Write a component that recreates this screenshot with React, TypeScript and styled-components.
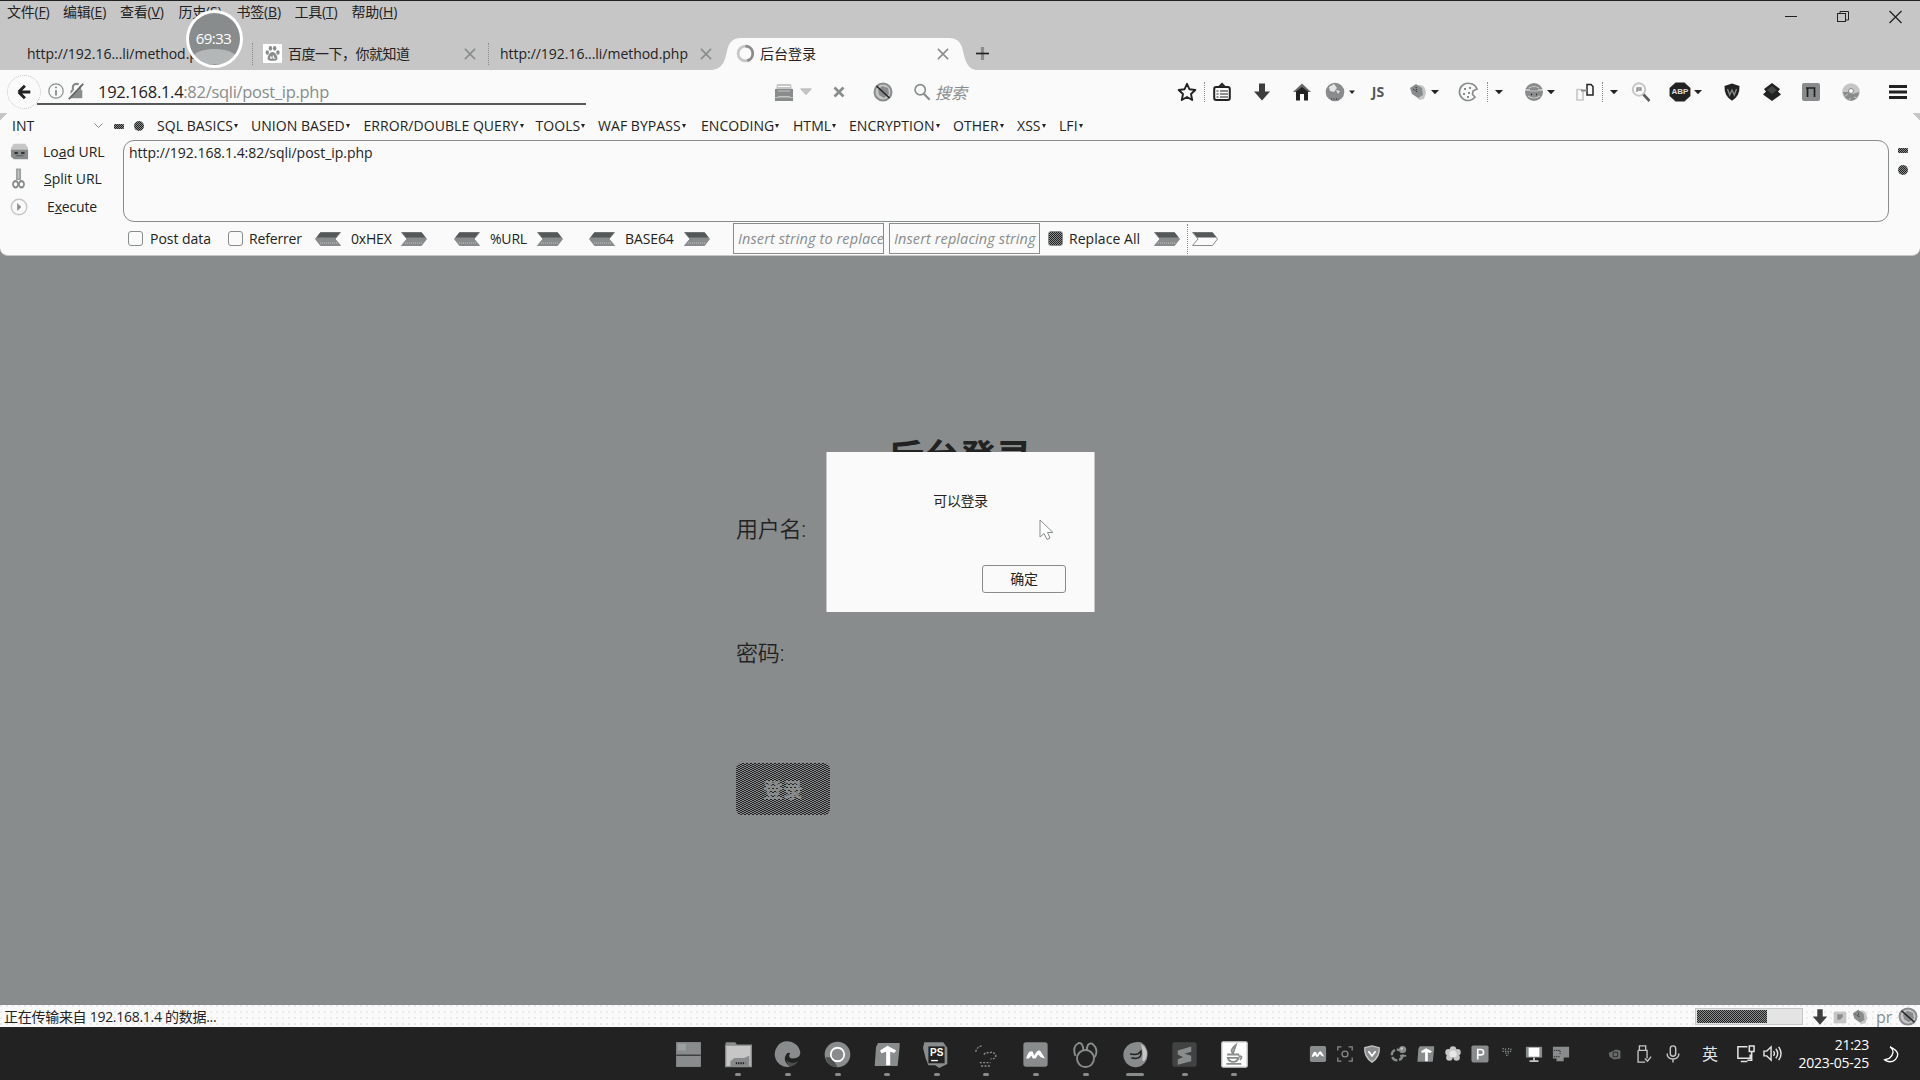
import React from "react";
import styled, { createGlobalStyle } from "styled-components";

const INK = "#222222";
const MID = "#888c8c";
const SILVER = "#c6c6c6";
const PAPER = "#fafafa";

const UI_FONT = `"Open Sans", "Noto Sans CJK SC", sans-serif`;
const CHECKER = `repeating-conic-gradient(${INK} 0 25%, ${MID} 0 50%) 0 0 / 2px 2px`;

const GlobalStyle = createGlobalStyle`
  * { box-sizing: border-box; }
  html, body { margin: 0; padding: 0; overflow: hidden; }
  body { font-family: ${UI_FONT}; font-size: 14px; color: ${INK}; background: ${MID}; }
  svg { display: block; }
`;

/* ---------- shared parts ---------- */

const Screen = styled.div`
  width: 1920px;
  height: 1080px;
  display: flex;
  flex-direction: column;
  overflow: hidden;
  background: ${MID};
  white-space: nowrap;
  cursor: default;
`;

const Cell = styled.div<{ $gap?: number; $w: number }>`
  flex: none;
  display: flex;
  align-items: center;
  width: ${(p) => p.$w}px;
  margin-left: ${(p) => p.$gap ?? 0}px;
`;

const Label = styled.span<{ $ls?: number; $size?: number }>`
  font-size: ${(p) => p.$size ?? 14}px;
  letter-spacing: ${(p) => p.$ls ?? -0.03}px;
  line-height: 20px;
`;

const Divider = styled.div<{ $gap: number; $h?: number }>`
  flex: none;
  width: 1px;
  height: ${(p) => p.$h ?? 20}px;
  margin-left: ${(p) => p.$gap}px;
  border-left: 1px dotted ${MID};
`;

const glyphs: Record<string, React.ReactNode> = {
  back: (
    <path d="M4 10 L11 3 M4 10 L11 17 M4.5 10 H17" fill="none" stroke={INK} strokeWidth="3.2" />
  ),
  info: (
    <g fill="none" stroke={MID} strokeWidth="1.3">
      <circle cx="10" cy="10" r="8" />
      <path d="M10 9v6M10 5v2" strokeWidth="2" />
    </g>
  ),
  lock: (
    <g>
      <path d="M4 9h13v9H4z" fill={MID} />
      <path d="M6.500 9V6a4 4 0 0 1 8 0v3" fill="none" stroke={MID} strokeWidth="2.400" />
      <path d="M2 17 L16 1" stroke={PAPER} strokeWidth="2" />
      <path d="M2 19 L18 2" stroke="#666969" strokeWidth="2" />
    </g>
  ),
  drive: (
    <g>
      <path d="M3 2h14l1 6H2z" fill={SILVER} />
      <path d="M1 7h18v8H1z" fill={MID} />
      <path d="M4 9h12" stroke={SILVER} strokeWidth="1" />
      <path d="M4 14h12v2H4z" fill={SILVER} />
      <path d="M1 15.500h18V19H1z" fill={MID} />
      <path d="M4 4.500h12" stroke={PAPER} strokeWidth="1" />
    </g>
  ),
  loadUrl: (
    <g>
      <path d="M4 1h12l3 5v4H1V6z" fill={SILVER} />
      <path d="M1 8h18v11H4l-3-3z" fill={MID} />
      <path d="M5 11h3v1.500H5zM12 11h3v1.500h-3zM6 15h8" fill={INK} stroke={INK} strokeWidth=".500" />
    </g>
  ),
  scissors: (
    <g fill="none" stroke={MID} strokeWidth="2">
      <path d="M10 .500v11" strokeWidth="6" strokeOpacity=".8" />
      <path d="M10 2v8" stroke={SILVER} strokeWidth="1.500" />
      <circle cx="6.500" cy="15.500" r="3" />
      <circle cx="13.500" cy="15.500" r="3" />
    </g>
  ),
  play: (
    <g>
      <circle cx="10" cy="10" r="8.600" fill="none" stroke={SILVER} strokeWidth="1.600" />
      <path d="M8 5.500 L12.500 10 L8 14.500z" fill={MID} />
    </g>
  ),
  stop: <path d="M2.500 2.500 L17.500 17.500 M17.500 2.500 L2.500 17.500" stroke={MID} strokeWidth="4.500" />,
  blocked: (
    <g>
      <circle cx="10" cy="10" r="8.500" fill={SILVER} stroke={MID} strokeWidth="2" />
      <path d="M5 8l4-4 6 2 1 6-5 4-5-3z" fill={MID} />
      <path d="M3.500 4 L16.500 16" stroke={INK} strokeWidth="1.600" />
    </g>
  ),
  search: (
    <g fill="none" stroke={MID}>
      <circle cx="8" cy="7.500" r="5.700" strokeWidth="1.800" />
      <path d="M12 12 L18.500 18.500" strokeWidth="2.400" />
    </g>
  ),
  star: (
    <path
      d="M10 1.800 L12.500 7.300 18.300 8 14 12 15.200 18 10 15 4.800 18 6 12 1.700 8 7.500 7.300z"
      fill="none"
      stroke={INK}
      strokeWidth="1.900"
      strokeLinejoin="round"
    />
  ),
  list: (
    <g fill="none" stroke={INK}>
      <rect x="2.200" y="5" width="15.600" height="13" rx="2" strokeWidth="2" />
      <path d="M7 5 L10 2 L13 5" strokeWidth="2" />
      <path d="M4.500 9h2M8 9h8M4.500 12h2M8 12h8M4.500 15h2M8 15h8" strokeWidth="1.200" />
    </g>
  ),
  down: (
    <path d="M7 1.500h6v8h5L10 18.500 2 9.500h5z" fill={INK} fillOpacity=".88" />
  ),
  home: (
    <g>
      <path d="M10 1.500 L19 10 H1z" fill="#666969" />
      <path d="M4 9.500 L10 5 L16 9.500 V18.500 H12 V12 H8 V18.500 H4z" fill={INK} />
    </g>
  ),
  globe: (
    <g>
      <circle cx="10" cy="10" r="9.300" fill={MID} />
      <path d="M4 5 L9 2 L12 6 L9 10 L5 9zM11 8l4 1-2 3z" fill="#e4e4e4" />
      <path d="M6 17h8" stroke={INK} strokeDasharray="1 1.500" />
    </g>
  ),
  caret: <path d="M2 6h16L10 14.500z" fill={INK} />,
  caretSmall: <path d="M4 7h12L10 14z" fill={INK} />,
  caretLight: <path d="M1 4h18L10 17z" fill={SILVER} stroke={MID} strokeWidth=".800" />,
  puzzle: (
    <g>
      <path d="M9 4q5-3 8 2l1 5-2 6-5 1-3-5z" fill={SILVER} />
      <path d="M2 6l6-4 6 4 1 7-5 3-6-4z" fill={MID} />
      <path d="M5 7l3 2M8 5l1 6" stroke={INK} strokeDasharray="1 1" />
    </g>
  ),
  cookie: (
    <g>
      <path
        d="M12 1.500 A8.600 8.600 0 1 0 17 15 L14.500 12.500 L15 9 L19 7 Q17 2 12 1.500z"
        fill="none"
        stroke={MID}
        strokeWidth="1.700"
      />
      <path d="M6 6h2v2H6zM11 5h2v2h-2zM5 11h2v2H5zM10 10h2v2h-2zM9 14h2v2H9z" fill={MID} />
    </g>
  ),
  smiley: (
    <g>
      <circle cx="10" cy="10" r="9" fill={MID} />
      <path d="M1 8h5M14 8h5" stroke={PAPER} strokeWidth="1.200" />
      <path d="M5 6q5-3 10 0M6 9h8" stroke={SILVER} fill="none" strokeWidth="1.200" />
      <path d="M4 14q6 4 12 0" stroke={SILVER} fill="none" strokeWidth="1.200" />
      <path d="M7 12.500h1M12 12.500h1" stroke={INK} strokeWidth="1.500" />
    </g>
  ),
  docs: (
    <g fill="none">
      <path d="M2 7.500h4l2 2V18H2z" stroke={SILVER} strokeWidth="1.600" />
      <path d="M12 2.500h4l2 2V13h-6z" stroke={INK} strokeWidth="1.500" />
      <path d="M6 8.500h6" stroke={MID} strokeWidth="2" />
    </g>
  ),
  lens: (
    <g fill="none">
      <circle cx="8" cy="7.500" r="6.200" stroke={SILVER} strokeWidth="2" />
      <path d="M6 10V6h4v2H6" stroke={MID} strokeWidth="1.300" />
      <path d="M12.500 12.500 L18.500 19" stroke="#5a5c5c" strokeWidth="2.600" />
    </g>
  ),
  abp: <path d="M6 0.500h8L19.500 6v8L14 19.500H6L0.500 14V6z" fill={INK} />,
  shield: (
    <g>
      <path d="M2.500 4 L10 1.500 17.500 4 Q18 14 10 18.800 Q2 14 2.500 4z" fill={INK} />
      <path d="M5.500 7l2.200 6L10 8l2.300 5 2.200-6" fill="none" stroke={MID} strokeWidth="1.300" />
    </g>
  ),
  diamond: (
    <g>
      <path d="M10 1 L18 7 L16 9.500 L19 12.500 L10 19 L1 12.500 L4 9.500 L2 7z" fill={INK} />
      <path d="M10 4l5 4-5 4-5-4z" fill="#444747" />
    </g>
  ),
  square: (
    <g>
      <rect x="1" y="1" width="18" height="18" rx="2" fill={MID} />
      <path d="M6.500 15V6h7v9M5 6h9" fill="none" stroke={INK} strokeWidth="1.700" />
    </g>
  ),
  disc: (
    <g>
      <circle cx="10" cy="10" r="8.800" fill={SILVER} />
      <path d="M2 10h6l4 2 6-2q0 7-8 9-7-2-8-9z" fill={MID} />
      <circle cx="10" cy="9" r="2.500" fill={PAPER} stroke={MID} />
      <path d="M4 14l3-2M13 15l3 1M9 16v2" stroke={SILVER} />
    </g>
  ),
  menu: (
    <g stroke={INK} strokeWidth="3">
      <path d="M1 4.500h18M1 10h18M1 15.500h18" />
    </g>
  ),
  close: <path d="M1.500 1.500 L18.500 18.500 M18.500 1.500 L1.500 18.500" stroke={MID} strokeWidth="2.600" />,
  plus: (
    <g>
      <path d="M10 0v20" stroke={MID} strokeWidth="5" />
      <path d="M0 10h20" stroke={INK} strokeWidth="2.600" />
    </g>
  ),
  spinner: (
    <g fill="none" strokeWidth="2.800">
      <circle cx="10" cy="10" r="7.800" stroke={SILVER} />
      <path d="M10 2.200 A7.800 7.800 0 0 1 12 17.500" stroke={MID} />
    </g>
  ),
  paw: (
    <g>
      <rect width="20" height="20" fill="#fff" />
      <g fill={MID}>
        <ellipse cx="4.500" cy="9" rx="1.800" ry="2.400" />
        <ellipse cx="7.800" cy="4.500" rx="1.800" ry="2.500" />
        <ellipse cx="12.300" cy="4.500" rx="1.800" ry="2.500" />
        <ellipse cx="15.700" cy="9" rx="1.800" ry="2.400" />
        <path d="M10 8.500q3 0 5 5 1 4-2.500 4h-5Q4 17.500 5 13.500q2-5 5-5z" />
      </g>
      <path d="M8 13v2h1.500v-2M11 12v3h2" stroke="#fff" fill="none" />
    </g>
  ),
  gray: (
    <g>
      <rect x="3" y="4" width="14" height="13" fill={SILVER} />
      <path d="M7 7h6v3l-3 3H7z" fill={MID} />
    </g>
  ),
  /* taskbar applications */
  windows: (
    <g>
      <rect x=".800" y=".800" width="18.400" height="18.400" fill={MID} />
      <path d="M1 10.500h18" stroke={INK} strokeWidth=".800" />
      <path d="M2 2h6v5H2z" fill={SILVER} opacity=".35" />
    </g>
  ),
  folder: (
    <g>
      <path d="M.500 1h7l1.500 2H.500z" fill={MID} />
      <path d="M.500 3h19v16H.500z" fill={SILVER} stroke={MID} />
      <path d="M4 19v-4l3-2.500h7l4-1.500v8z" fill={MID} />
      <path d="M8 16.500h7" stroke={INK} strokeWidth="1.600" strokeDasharray="1 .700" />
    </g>
  ),
  edge: (
    <g>
      <path d="M19.500 9 A9.500 9.500 0 1 0 12 19 Q6 15 9 10 Q10 8 12 9 Q10 12 13 13 Q19 13 19.500 9z" fill={MID} />
      <path d="M9 14q3 4 9 1-3 4-7 4z" fill="#4c4e4e" />
    </g>
  ),
  chrome: (
    <g>
      <circle cx="10" cy="10" r="9.500" fill={MID} />
      <path d="M1 12 L6 12 10 19.500 Q3 19 1 12z" fill="#505353" />
      <circle cx="10" cy="10" r="5" fill={MID} stroke="#fff" strokeWidth="1.300" />
    </g>
  ),
  tApp: (
    <g>
      <path d="M3 1.500h16v3l-1.500 14H.500l1-14z" fill={MID} />
      <path d="M4.500 7 L10 3.500 L16.500 7 L15 8.800 L12 8v10H9V8L5.500 9z" fill="#fff" />
    </g>
  ),
  ps: (
    <g>
      <path d="M1 1h14l3 4v12l-6 3-3-2H4L2 13 0 5z" fill={MID} />
      <rect x="4" y="4" width="12" height="12.500" fill={INK} />
      <path d="M6 14.500h5" stroke="#fff" />
    </g>
  ),
  bird: (
    <g fill="none" stroke={MID} strokeWidth="1" strokeDasharray="1.500 1">
      <path d="M2 8 Q3 4 7 3.500M8 10q2-2 4-1 3-2 5 2-1 3-4 2M5 16h8M6 18.500h7" />
    </g>
  ),
  mountain: (
    <g>
      <rect x="1" y="1" width="18" height="18" rx="2" fill={MID} />
      <path d="M3 13q2-7 5-5l1 3q3-6 5-3l3 5-3-1-2-2-2 3H8l-1-2-2 2z" fill="#fff" />
    </g>
  ),
  pawOutline: (
    <g fill="none" stroke={MID} strokeWidth="1.400">
      <circle cx="10" cy="13" r="6.300" />
      <path d="M2.500 11 Q0 4 5 1.500 Q8 1 8.500 7M11 7 Q11 1 15 2 Q20 6 17 12" />
    </g>
  ),
  firefox: (
    <g>
      <path d="M6 2 A9 9.200 0 1 0 19 10 Q19 4 14 1 Q10 0 6 2z" fill={MID} />
      <path d="M14 2q7 5 3 12-1 2-2 0 1-6-1-12z" fill={SILVER} />
      <path d="M6 9.500q3 1 6 0l2-2q1 5-4 5.500l-3-.500" fill="none" stroke={INK} strokeWidth="1.200" />
    </g>
  ),
  sublime: (
    <g>
      <rect x="1" y="1" width="18" height="18" rx="1.500" fill="#414343" />
      <path d="M15 4v4l-5 1.500 5 1.500v4l-10 2.500v-4l4-1.500-4-2V7z" fill={MID} />
    </g>
  ),
  java: (
    <g>
      <rect x=".600" y=".600" width="18.800" height="18.800" rx="1" fill="#fff" stroke={SILVER} />
      <path d="M11 3q-5 4-2 6 1-3 2-6zM4.500 10h9M5 12.500h8q-1 3-4 3t-4-3zM13 11q4 0 1 3M4 17h11" fill="none" stroke={MID} strokeWidth="1.300" />
    </g>
  ),
  /* notification area */
  scan: (
    <g fill="none" stroke={MID} strokeWidth="1.400">
      <path d="M2 6V2h4M14 2h4v4M18 14v4h-4M6 18H2v-4" />
      <circle cx="10" cy="10" r="3.300" />
    </g>
  ),
  guard: (
    <g>
      <path d="M2 3 L10 1 18 3 Q19 13 10 19 Q1 13 2 3z" fill={MID} stroke={SILVER} strokeWidth="1.500" />
      <path d="M6 7l4 5 4-5" fill="none" stroke="#fff" strokeWidth="2" />
    </g>
  ),
  wheel: (
    <g>
      <circle cx="8" cy="11" r="6" fill="none" stroke={MID} strokeWidth="2.500" strokeDasharray="7 2" />
      <circle cx="14" cy="5" r="4" fill={MID} />
      <circle cx="13" cy="4" r="1.500" fill={SILVER} />
      <path d="M11 12h7" stroke={MID} strokeWidth="2" />
    </g>
  ),
  flower: (
    <g fill={SILVER}>
      <circle cx="10" cy="5" r="3.600" />
      <circle cx="5" cy="8" r="3.600" />
      <circle cx="15" cy="8" r="3.600" />
      <circle cx="6" cy="14" r="3.600" />
      <circle cx="14" cy="14" r="3.600" />
      <circle cx="10" cy="10" r="4" fill="#e8e8e8" />
    </g>
  ),
  parking: (
    <g>
      <rect x=".500" y=".500" width="19" height="19" rx="2" fill={MID} />
      <path d="M7.500 16V5h3.500a3 3 0 0 1 0 6H8" fill="none" stroke="#fff" strokeWidth="1.800" />
    </g>
  ),
  sprout: (
    <path d="M5 4l4 1M11 4l4 1M5 7l10 0M8 9l5 0M9 11.500h3" fill="none" stroke={MID} strokeWidth="1.500" strokeDasharray="1.500 1.200" />
  ),
  monitor: (
    <g>
      <rect x="1" y="2" width="18" height="12" fill={MID} />
      <rect x="4" y="3" width="12" height="10" fill="#fff" />
      <path d="M10 14v3M5 18h10" stroke={SILVER} strokeWidth="2" />
    </g>
  ),
  display: (
    <g>
      <path d="M1 2h18v12H13v4H5v-3H1z" fill={MID} />
      <path d="M2 6h7v4M2 13h7" fill="none" stroke={INK} strokeDasharray="1.500 1" />
    </g>
  ),
  satellite: (
    <g fill={MID}>
      <path d="M3 9l8-4 5 1v9l-7 1-5-3z" opacity=".7" />
      <path d="M8 8h5v5H8z" fill="none" stroke={INK} />
    </g>
  ),
  usb: (
    <g fill="none" stroke={SILVER} strokeWidth="1.500">
      <path d="M6 6V1h7v5M4.500 6h10v9M4.500 6v13h8M12 15l3 3 4-5" />
    </g>
  ),
  mic: (
    <g fill="none" stroke={SILVER} strokeWidth="1.600">
      <rect x="7" y="1" width="6" height="11.500" rx="3" />
      <path d="M3.500 9.500q0 6 6.500 6t6.500-6M10 15.500v4" />
    </g>
  ),
  network: (
    <g fill="none" stroke="#e4e4e4" strokeWidth="1.600">
      <path d="M12 3H2v12h13v-4M5 18.500h7M14 2h5v6h-5zM16.500 8v9H12" />
    </g>
  ),
  volume: (
    <g fill="none" stroke="#e4e4e4" strokeWidth="1.500">
      <path d="M1 7.500h3L8.500 3v14L4 12.500H1zM11 7.500q2 2.500 0 5M13.500 5q4 5 0 10M16.500 3q5 7 0 14" />
    </g>
  ),
  moon: (
    <path d="M9 2 Q16 8 8 15 L3 16.500 Q9 21 15 16 Q22 8 9 2z" fill="none" stroke="#fff" strokeWidth="1.500" />
  ),
};

const Icon = ({ name, w = 20, h }: { name: string; w?: number; h?: number }) => (
  <svg width={w} height={h ?? w} viewBox="0 0 20 20" preserveAspectRatio="none">
    {glyphs[name]}
  </svg>
);

const IconSlot = ({ name, gap = 0, w = 20, h }: { name: string; gap?: number; w?: number; h?: number }) => (
  <Cell $gap={gap} $w={w}>
    <Icon name={name} w={w} h={h} />
  </Cell>
);

/* ---------- title area ---------- */

const TitleArea = styled.header`
  position: relative;
  height: 70px;
  border-top: 1px solid ${INK};
  background: ${SILVER};
  display: flex;
  flex-direction: column;
`;

const MenuBar = styled.nav`
  height: 36px;
  display: flex;
  align-items: flex-start;
  padding: 1px 0 0 7px;
`;

const WindowControls = styled.div`
  margin-left: auto;
  display: flex;
  align-items: center;
  gap: 40px;
  padding: 8px 18px 0 0;
`;

const TabStrip = styled.div`
  height: 33px;
  display: flex;
  align-items: center;
`;

const ActiveTab = styled.div`
  position: relative;
  flex: none;
  width: 264px;
  height: 33px;
  display: flex;
  align-items: center;
`;

const TabShape = styled.svg`
  position: absolute;
  inset: 0;
`;

const TabContent = styled.div`
  position: relative;
  display: flex;
  align-items: center;
`;

const TimerBubble = styled.div`
  position: absolute;
  left: 186px;
  top: 9px;
  width: 57px;
  height: 58px;
  border-radius: 50%;
  border: 3px solid #fff;
  background: radial-gradient(ellipse 22px 8px at 50% 84%, #b4b7b7 90%, transparent 100%), ${MID};
  color: #fff;
  display: flex;
  align-items: center;
  justify-content: center;
  font-size: 15px;
  font-weight: 500;
  letter-spacing: -0.5px;
  padding: 0 2px 2px 0;
`;

const menus: [string, string, number][] = [
  ["文件", "F", 56],
  ["编辑", "E", 57],
  ["查看", "V", 58.500],
  ["历史", "S", 58],
  ["书签", "B", 58],
  ["工具", "T", 57],
  ["帮助", "H", 60],
];

const TitleBar = () => (
  <TitleArea>
    <MenuBar>
      {menus.map(([name, key, w]) => (
        <Cell key={key} $w={w}>
          <Label $ls={-0.2}>
            {name}(<u>{key}</u>)
          </Label>
        </Cell>
      ))}
      <WindowControls>
        <svg width="12" height="14"><path d="M0 6.500h12" stroke={INK} /></svg>
        <svg width="12" height="14">
          <path d="M3 3V1.500h8.500V10H9" fill="none" stroke={INK} />
          <rect x=".500" y="3.500" width="8" height="8" fill="none" stroke={INK} />
        </svg>
        <svg width="13" height="14"><path d="M.500 1 L12.500 13 M12.500 1 L.500 13" stroke={INK} strokeWidth="1.300" /></svg>
      </WindowControls>
    </MenuBar>
    <TabStrip>
      <Cell $gap={27} $w={225}>
        <Label>http://192.16...li/method.php</Label>
      </Cell>
      <Divider $gap={0} $h={22} />
      <IconSlot name="paw" gap={10} w={19} />
      <Cell $gap={6} $w={176}>
        <Label $ls={-0.5}>百度一下，你就知道</Label>
      </Cell>
      <IconSlot name="close" w={12} />
      <Divider $gap={12} $h={22} />
      <Cell $gap={11} $w={200}>
        <Label>http://192.16...li/method.php</Label>
      </Cell>
      <IconSlot name="close" w={12} />
      <ActiveTab>
        <TabShape width="264" height="33" viewBox="0 0 264 33">
          <path d="M0 33 Q10 32 13 22 L16 10 Q19 1 29 1 H237 Q247 1 250 10 L253 22 Q256 32 264 33z" fill={PAPER} />
        </TabShape>
        <TabContent>
          <IconSlot name="spinner" gap={24} w={19} />
          <Cell $gap={5} $w={177}>
            <Label $ls={0}>后台登录</Label>
          </Cell>
          <IconSlot name="close" w={12} />
        </TabContent>
      </ActiveTab>
      <IconSlot name="plus" w={13} />
    </TabStrip>
    <TimerBubble>69:33</TimerBubble>
  </TitleArea>
);

/* ---------- address row ---------- */

const AddressRow = styled.div`
  height: 43px;
  background: ${PAPER};
  display: flex;
  align-items: center;
`;

const BackButton = styled.button`
  flex: none;
  width: 34px;
  height: 34px;
  margin-left: 7px;
  padding: 0;
  border: 1px dotted ${SILVER};
  border-radius: 50%;
  background: ${PAPER};
  display: flex;
  align-items: center;
  justify-content: center;
`;

const UrlField = styled.div`
  flex: none;
  width: 549px;
  height: 27px;
  margin: 0 0 0 -4px;
  border-bottom: 2px solid #555858;
  display: flex;
  align-items: center;
`;

const UrlText = styled.span`
  margin: 2px 0 0 13px;
  font-size: 16.500px;
  letter-spacing: -0.290px;
  line-height: 22px;
  color: ${MID};
  b { font-weight: 400; color: ${INK}; }
`;

const SearchHint = styled.span`
  font-size: 16px;
  font-style: italic;
  color: ${MID};
`;

const JsMark = styled.span`
  font: 700 14px/20px "Noto Sans", sans-serif;
  color: #555858;
  width: 20px;
  text-align: center;
`;

const AbpMark = styled.div`
  display: grid;
  place-items: center;
  > * { grid-area: 1 / 1; }
  span { font: 700 8px/8px "Liberation Sans", sans-serif; color: #dcdcdc; }
`;

type Tool = [string, number, number?];
const toolsBeforeJs: Tool[] = [
  ["star", 201], ["|", 7], ["list", 7], ["down", 20], ["home", 20], ["globe", 13], ["caretSmall", 2, 10],
];
const toolsAfterJs: Tool[] = [
  ["puzzle", 20], ["caret", 2, 10], ["cookie", 18], ["|", 9], ["caret", 6, 10], ["smiley", 20],
  ["caret", 2, 10], ["docs", 19], ["|", 7], ["caret", 6, 10], ["lens", 12],
];
const toolsAfterAbp: Tool[] = [
  ["caret", 2, 10], ["shield", 19], ["diamond", 20], ["square", 19], ["disc", 20], ["menu", 27],
];

const ToolGroup = ({ tools }: { tools: Tool[] }) => (
  <>
    {tools.map(([name, gap, w], i) =>
      name === "|" ? <Divider key={i} $gap={gap} /> : <IconSlot key={i} name={name} gap={gap} w={w ?? 20} />
    )}
  </>
);

const AddressBar = () => (
  <AddressRow>
    <BackButton><Icon name="back" w={18} /></BackButton>
    <UrlField>
      <IconSlot name="info" gap={10} w={18} />
      <IconSlot name="lock" gap={2} w={18} />
      <UrlText><b>192.168.1.4</b>:82/sqli/post_ip.php</UrlText>
    </UrlField>
    <IconSlot name="drive" gap={188} w={20} />
    <IconSlot name="caretLight" gap={6} w={12} h={9} />
    <IconSlot name="stop" gap={21} w={12} />
    <IconSlot name="blocked" gap={28} />
    <IconSlot name="search" gap={20} w={18} />
    <Cell $gap={4} $w={41}><SearchHint>搜索</SearchHint></Cell>
    <ToolGroup tools={toolsBeforeJs} />
    <Cell $gap={11} $w={20}><JsMark>JS</JsMark></Cell>
    <ToolGroup tools={toolsAfterJs} />
    <Cell $gap={18} $w={22}>
      <AbpMark><Icon name="abp" w={22} h={20} /><span>ABP</span></AbpMark>
    </Cell>
    <ToolGroup tools={toolsAfterAbp} />
  </AddressRow>
);

/* ---------- hackbar ---------- */

const HackPanel = styled.section`
  height: 143px;
  background:
    linear-gradient(135deg, ${SILVER} 5px, transparent 5.500px),
    linear-gradient(225deg, ${SILVER} 5px, transparent 5.500px),
    ${PAPER};
  border-bottom: 1px solid ${SILVER};
  border-radius: 0 0 8px 8px;
  display: flex;
  flex-direction: column;
`;

const HackMenu = styled.div`
  height: 27px;
  display: flex;
  align-items: center;
  padding: 0 0 0 12px;
`;

const MenuLabel = styled(Label)`
  margin-top: -1px;
`;

const Tick = styled.i`
  display: inline-block;
  margin-left: 1px;
  vertical-align: 3px;
  border: 2.500px solid transparent;
  border-top: 4px solid ${INK};
  border-bottom: 0;
`;

const Minus = styled.div`
  width: 10px;
  height: 5px;
  border-radius: 1px;
  background: ${CHECKER};
`;

const Dot = styled.div`
  width: 10px;
  height: 10px;
  border-radius: 5px;
  background: ${CHECKER};
`;

const HackBody = styled.div`
  height: 82px;
  display: flex;
`;

const SideActions = styled.div`
  width: 123px;
  display: flex;
  flex-direction: column;
`;

const SideAction = styled.div<{ $h: number }>`
  height: ${(p) => p.$h}px;
  display: flex;
  align-items: center;
  padding-left: 10px;
`;

const UrlArea = styled.div`
  width: 1766px;
  height: 82px;
  border: 1px solid ${MID};
  border-radius: 11px;
  padding: 2px 5px;
`;

const SideKnobs = styled.div`
  padding: 8px 0 0 9px;
  display: flex;
  flex-direction: column;
  gap: 12px;
`;

const HackFooter = styled.div`
  height: 34px;
  display: flex;
  align-items: center;
  padding: 1px 0 0 128px;
`;

const CheckBox = styled.div<{ $filled?: boolean }>`
  width: 15px;
  height: 15px;
  border: 1px solid ${MID};
  border-radius: 3px;
  background: ${(p) => (p.$filled ? CHECKER : PAPER)};
`;

const ReplaceField = styled.div<{ $gap: number }>`
  flex: none;
  width: 151px;
  height: 31px;
  margin-left: ${(p) => p.$gap}px;
  padding-left: 4px;
  border: 1px solid ${MID};
  overflow: hidden;
  font-size: 14.500px;
  font-style: italic;
  letter-spacing: 0.100px;
  line-height: 30px;
  color: ${MID};
`;

const Chevron = ({ gap, left, hollow }: { gap: number; left?: boolean; hollow?: boolean }) => (
  <Cell $gap={gap} $w={26}>
    <svg width="26" height="14" viewBox="0 0 26 14">
      <g transform={left ? "translate(26 0) scale(-1 1)" : undefined}>
        <path d="M.500 .500h20l5 6.500-5 6.500H.500L6 7z" fill={hollow ? PAPER : MID} stroke={MID} />
        <path d="M1 .500h19.500l4 5H5z" fill="#555858" />
        {!hollow && <path d="M4 11h17" stroke={SILVER} strokeDasharray="1 1" />}
      </g>
    </svg>
  </Cell>
);

const hackMenus: [string, number][] = [
  ["SQL BASICS", 94], ["UNION BASED", 112.500], ["ERROR/DOUBLE QUERY", 172], ["TOOLS", 62.500],
  ["WAF BYPASS", 103], ["ENCODING", 92], ["HTML", 56], ["ENCRYPTION", 104], ["OTHER", 64],
  ["XSS", 42], ["LFI", 30],
];

const HackBar = () => (
  <HackPanel>
    <HackMenu>
      <Cell $w={82}><MenuLabel>INT</MenuLabel></Cell>
      <Cell $w={20}>
        <svg width="9" height="6"><path d="M.500 .500 L4.500 4.500 L8.500 .500" fill="none" stroke={MID} /></svg>
      </Cell>
      <Cell $w={20}><Minus /></Cell>
      <Cell $w={23}><Dot /></Cell>
      {hackMenus.map(([name, w]) => (
        <Cell key={name} $w={w}><MenuLabel $ls={0.05}>{name}<Tick /></MenuLabel></Cell>
      ))}
    </HackMenu>
    <HackBody>
      <SideActions>
        <SideAction $h={24}>
          <IconSlot name="loadUrl" w={19} h={17} />
          <Cell $gap={14} $w={64}><Label>Lo<u>a</u>d URL</Label></Cell>
        </SideAction>
        <SideAction $h={30}>
          <IconSlot name="scissors" w={17} h={21} />
          <Cell $gap={17} $w={64}><Label><u>S</u>plit URL</Label></Cell>
        </SideAction>
        <SideAction $h={27}>
          <IconSlot name="play" w={18} />
          <Cell $gap={19} $w={64}><Label $ls={-0.15}>E<u>x</u>ecute</Label></Cell>
        </SideAction>
      </SideActions>
      <UrlArea><Label>http://192.168.1.4:82/sqli/post_ip.php</Label></UrlArea>
      <SideKnobs><Minus /><Dot /></SideKnobs>
    </HackBody>
    <HackFooter>
      <CheckBox />
      <Cell $gap={7} $w={78}><Label>Post data</Label></Cell>
      <CheckBox />
      <Cell $gap={6} $w={66}><Label $ls={-0.15}>Referrer</Label></Cell>
      <Chevron gap={0} left />
      <Cell $gap={10} $w={50}><Label $ls={-0.2}>0xHEX</Label></Cell>
      <Chevron gap={0} />
      <Chevron gap={27} left />
      <Cell $gap={10} $w={47}><Label $ls={-0.2}>%URL</Label></Cell>
      <Chevron gap={0} />
      <Chevron gap={26} left />
      <Cell $gap={10} $w={59}><Label $ls={-0.1}>BASE64</Label></Cell>
      <Chevron gap={0} />
      <ReplaceField $gap={23}>Insert string to replace</ReplaceField>
      <ReplaceField $gap={5}>Insert replacing string</ReplaceField>
      <Cell $gap={8} $w={21}><CheckBox $filled /></Cell>
      <Cell $w={85}><Label $ls={0.05}>Replace All</Label></Cell>
      <Chevron gap={0} />
      <Divider $gap={7} $h={30} />
      <Chevron gap={4} hollow />
    </HackFooter>
  </HackPanel>
);

/* ---------- page ---------- */

const Page = styled.main`
  position: relative;
  height: 749px;
  padding: 176px 0 0 736px;
  display: flex;
  flex-direction: column;
  align-items: flex-start;
`;

const Heading = styled.h1`
  margin: 0 0 0 152px;
  height: 50px;
  font-size: 36px;
  font-weight: 700;
  line-height: 51px;
`;

const FieldRow = styled.label<{ $top: number }>`
  height: 32px;
  margin-top: ${(p) => p.$top}px;
  font-size: 22px;
  font-weight: 350;
  letter-spacing: -0.300px;
  line-height: 32px;
`;

const LoginButton = styled.button`
  width: 94px;
  height: 52px;
  margin-top: 95px;
  padding: 4px 0 0;
  border: 0;
  border-radius: 6px;
  background: repeating-conic-gradient(${INK} 0 25%, ${MID} 0 50%) 0 0 / 4px 2px, ${MID};
  color: ${MID};
  font: 700 20px/24px ${UI_FONT};
`;

const AlertBox = styled.div`
  position: absolute;
  left: 826px;
  top: 196px;
  width: 269px;
  height: 160px;
  padding: 39px 28px 0;
  background: ${PAPER};
  border: 1px solid ${SILVER};
  border-width: 0 1px;
  display: flex;
  flex-direction: column;
  align-items: center;
`;

const ConfirmButton = styled.button`
  align-self: flex-end;
  width: 84px;
  height: 28px;
  margin-top: 54px;
  padding: 0;
  border: 1px solid ${MID};
  border-radius: 3px;
  background: ${PAPER};
  color: ${INK};
  font: 400 14px/20px ${UI_FONT};
  letter-spacing: -0.300px;
`;

const Pointer = styled.svg`
  position: absolute;
  left: 212px;
  top: 67px;
`;

const LoginPage = () => (
  <Page>
    <Heading>后台登录</Heading>
    <FieldRow $top={30}>用户名:</FieldRow>
    <FieldRow $top={92}>密码:</FieldRow>
    <LoginButton>登录</LoginButton>
    <AlertBox>
      <Label $ls={-0.4}>可以登录</Label>
      <ConfirmButton>确定</ConfirmButton>
      <Pointer width="16" height="22">
        <path d="M1 1 V18 L5 14.500 L8 20.500 L11 19 L8.500 13.500 H14z" fill="#fff" stroke={MID} />
      </Pointer>
    </AlertBox>
  </Page>
);

/* ---------- status bar and taskbar ---------- */

const StatusRow = styled.footer`
  height: 22px;
  padding: 1px 0 0 4px;
  background: radial-gradient(circle at 1px 1px, ${SILVER} 0.500px, transparent 0.800px) 0 0 / 6px 6px, ${PAPER};
  display: flex;
  align-items: center;
`;

const Progress = styled.div`
  width: 108px;
  height: 17px;
  padding: 1px;
  border: 1px solid ${SILVER};
  background: #e4e4e4;
`;

const ProgressFill = styled.div`
  width: 70px;
  height: 100%;
  background: ${CHECKER};
`;

const PrMark = styled.span`
  font-size: 16px;
  line-height: 18px;
  color: ${MID};
`;

const TaskRow = styled.div`
  height: 53px;
  background: ${INK};
  display: flex;
  align-items: center;
  padding-left: 664px;
`;

const TaskApp = styled.div`
  flex: none;
  width: 49.600px;
  height: 53px;
  padding-top: 14px;
  display: flex;
  flex-direction: column;
  align-items: center;
  gap: 5px;
`;

const Indicator = styled.div<{ $wide?: boolean }>`
  width: ${(p) => (p.$wide ? 18 : 6)}px;
  height: 3px;
  border-radius: 2px;
  background: ${MID};
`;

const PsFrame = styled.div`
  display: grid;
  place-items: center;
  > * { grid-area: 1 / 1; }
  span { font: 700 10px/10px "Liberation Sans", sans-serif; color: #fff; margin-bottom: 4px; }
`;

const TrayCell = styled.div<{ $w?: number; $gap?: number }>`
  flex: none;
  width: ${(p) => p.$w ?? 27}px;
  margin-left: ${(p) => p.$gap ?? 0}px;
  display: flex;
  justify-content: center;
`;

const Ime = styled.span`
  font-size: 16px;
  line-height: 20px;
  color: #e4e4e4;
`;

const Clock = styled.div`
  flex: none;
  width: 83px;
  text-align: right;
  color: #fff;
  font-size: 14px;
  letter-spacing: -0.250px;
  line-height: 17.500px;
`;

const apps = ["windows", "folder", "edge", "chrome", "tApp", "ps", "bird", "mountain", "pawOutline", "firefox", "sublime", "java"];
const tray = ["mountain", "scan", "guard", "wheel", "tApp", "flower", "parking", "sprout", "monitor", "display"];

const StatusBar = () => (
  <StatusRow>
    <Cell $w={1691}><Label $ls={-0.280}>正在传输来自 192.168.1.4 的数据...</Label></Cell>
    <Progress><ProgressFill /></Progress>
    <IconSlot name="down" gap={8} w={18} />
    <IconSlot name="gray" gap={2} w={18} />
    <IconSlot name="puzzle" gap={2} w={18} />
    <Cell $gap={7} $w={22}><PrMark>pr</PrMark></Cell>
    <IconSlot name="blocked" w={20} h={19} />
  </StatusRow>
);

const TaskBar = () => (
  <TaskRow>
    {apps.map((name) => (
      <TaskApp key={name}>
        {name === "ps" ? (
          <PsFrame><Icon name="ps" w={27} /><span>PS</span></PsFrame>
        ) : (
          <Icon name={name} w={27} />
        )}
        {name !== "windows" && <Indicator $wide={name === "firefox"} />}
      </TaskApp>
    ))}
    <TrayCell $w={45} />
    {tray.map((name) => (
      <TrayCell key={name}><Icon name={name} w={18} /></TrayCell>
    ))}
    <TrayCell $gap={27} $w={28}><Icon name="satellite" w={18} /></TrayCell>
    <TrayCell $w={28}><Icon name="usb" w={18} /></TrayCell>
    <TrayCell $w={31}><Icon name="mic" w={18} /></TrayCell>
    <TrayCell $gap={8} $w={28}><Ime>英</Ime></TrayCell>
    <TrayCell $gap={7} $w={28}><Icon name="network" w={19} /></TrayCell>
    <TrayCell $w={27}><Icon name="volume" w={19} /></TrayCell>
    <Clock>21:23<br />2023-05-25</Clock>
    <TrayCell $gap={10} $w={24}><Icon name="moon" w={18} /></TrayCell>
  </TaskRow>
);

export default function App() {
  return (
    <>
      <GlobalStyle />
      <Screen>
        <TitleBar />
        <AddressBar />
        <HackBar />
        <LoginPage />
        <StatusBar />
        <TaskBar />
      </Screen>
    </>
  );
}
